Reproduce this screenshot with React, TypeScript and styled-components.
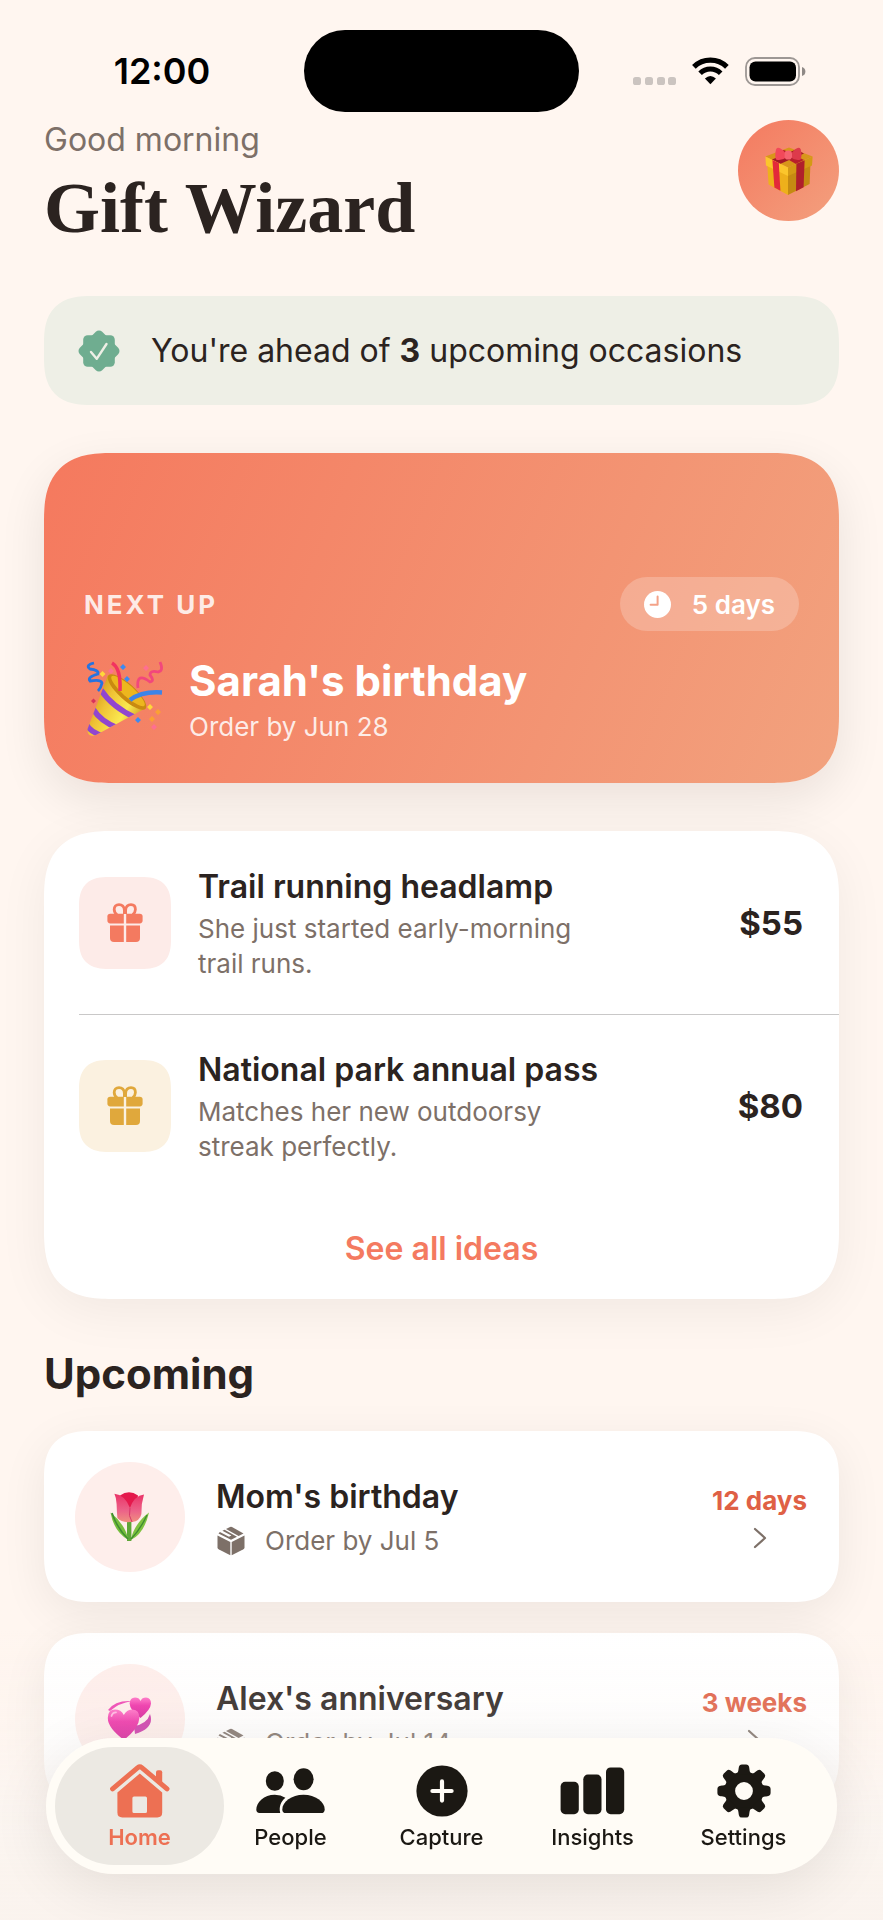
import React from 'react'
import styled, { createGlobalStyle, css } from 'styled-components'

const colors = {
    background: '#fff6f0',
    ink: '#2b2320',
    muted: '#7d7068',
    coral: '#f47a60',
    coralDark: '#df6045',
    sage: '#6fad90',
    sageLight: '#eeefe6',
    gold: '#e0a83c',
}

// Rounded corners that ease into the straight edge where the browser can draw them
const smoothCorners = (radius: number, smoothRadius: number) => css`
    border-radius: ${radius}px;

    @supports (corner-shape: superellipse(1.4)) {
        border-radius: ${smoothRadius}px;
        corner-shape: superellipse(1.4);
    }
`

const GlobalStyle = createGlobalStyle`
    * {
        box-sizing: border-box;
    }

    body {
        margin: 0;
        background: ${colors.background};
        color: ${colors.ink};
        font-family: Inter, 'Liberation Sans', sans-serif;
        -webkit-font-smoothing: antialiased;
    }

    a {
        color: inherit;
        text-decoration: none;
    }

    svg {
        display: block;
        flex-shrink: 0;
    }
`

const Page = styled.div`
    min-height: 100vh;
    padding-bottom: 116px;
`

const StatusBar = styled.div`
    display: grid;
    grid-template-columns: 1fr auto 1fr;
    align-items: center;
    padding: 30px 44px 0 44px;
    height: 112px;
    color: #000000;
`

const Time = styled.time`
    justify-self: center;
    font-size: 36px;
    font-weight: 600;
    line-height: 44px;
    padding-right: 24px;
`

const Island = styled.div`
    width: 275px;
    height: 82px;
    border-radius: 41px;
    background: #000000;
`

const StatusIcons = styled.div`
    display: flex;
    align-items: center;
    justify-self: end;
    gap: 16px;
    padding-right: 33px;
`

const Content = styled.main`
    display: flex;
    flex-direction: column;
    gap: 48px;
    padding: 8px 44px 0 44px;
`

const Header = styled.header`
    display: flex;
    justify-content: space-between;
    align-items: flex-start;
`

const Greeting = styled.p`
    margin: 0 0 8px 0;
    color: ${colors.muted};
    font-size: 32px;
    line-height: 40px;
`

const Title = styled.h1`
    margin: 0;
    font-family: 'Liberation Serif', serif;
    font-size: 72px;
    font-weight: 700;
    line-height: 80px;
`

const ProfileButton = styled.button`
    display: flex;
    align-items: center;
    justify-content: center;
    width: 101px;
    height: 101px;
    padding: 0;
    border: 0;
    border-radius: 50%;
    background: linear-gradient(135deg, ${colors.coral}, #f3a07e);
`

const Banner = styled.section`
    display: flex;
    align-items: center;
    gap: 31px;
    min-height: 109px;
    padding: 0 34px;
    ${smoothCorners(36, 48)}
    background: ${colors.sageLight};
    font-size: 32px;
    line-height: 41px;
`

const Hero = styled.section`
    display: flex;
    flex-direction: column;
    justify-content: flex-end;
    gap: 24px;
    min-height: 330px;
    padding: 38px 40px;
    ${smoothCorners(52, 68)}
    background: linear-gradient(112deg, #f5795e, #f2a27e);
    box-shadow: 0 16px 48px rgba(20, 10, 5, 0.09);
    color: #ffffff;
`

const HeroTop = styled.div`
    display: flex;
    align-items: center;
    justify-content: space-between;
`

const Eyebrow = styled.span`
    color: rgba(255, 255, 255, 0.85);
    font-size: 26px;
    font-weight: 700;
    letter-spacing: 3px;
`

const Countdown = styled.span`
    display: flex;
    align-items: center;
    gap: 21px;
    height: 54px;
    padding: 0 24px;
    border-radius: 27px;
    background: rgba(255, 255, 255, 0.22);
    font-size: 26px;
    font-weight: 600;
`

const HeroBottom = styled.div`
    display: flex;
    align-items: center;
    gap: 25px;
`

const HeroTitle = styled.h2`
    margin: 0 0 2px 0;
    font-size: 42px;
    font-weight: 700;
    line-height: 52px;
`

const HeroNote = styled.p`
    margin: 0;
    color: rgba(255, 255, 255, 0.85);
    font-size: 26px;
    line-height: 36px;
`

const Ideas = styled.section`
    ${smoothCorners(52, 68)}
    background: #ffffff;
    box-shadow: 0 12px 52px rgba(20, 10, 5, 0.06);
`

const IdeaList = styled.ul`
    margin: 0;
    padding: 0 0 0 35px;
    list-style: none;
`

const IdeaRow = styled.li`
    display: flex;
    align-items: center;
    gap: 27px;
    height: 183px;
    padding-right: 36px;

    & + & {
        border-top: 1px solid #c9c8c8;
    }
`

const Tile = styled.div<{ $background: string }>`
    display: flex;
    align-items: center;
    justify-content: center;
    flex-shrink: 0;
    width: 92px;
    height: 92px;
    ${smoothCorners(24, 30)}
    background: ${({ $background }) => $background};
`

const IdeaText = styled.div`
    flex: 1;
`

const RowTitle = styled.h3`
    margin: 0 0 2px 0;
    font-size: 32px;
    font-weight: 600;
    line-height: 44px;
`

const IdeaNote = styled.p`
    margin: 0;
    max-width: 410px;
    color: ${colors.muted};
    font-size: 26px;
    line-height: 35px;
`

const Price = styled.span`
    font-size: 33px;
    font-weight: 700;
`

const SeeAll = styled.button`
    display: block;
    width: 100%;
    height: 102px;
    padding: 0;
    border: 0;
    background: none;
    color: ${colors.coral};
    font-family: inherit;
    font-size: 32px;
    font-weight: 600;
`

const SectionTitle = styled.h2`
    margin: 0 0 30px 0;
    font-size: 42px;
    font-weight: 700;
    line-height: 54px;
`

const OccasionList = styled.ul`
    display: flex;
    flex-direction: column;
    gap: 31px;
    margin: 0;
    padding: 0;
    list-style: none;
`

const OccasionCard = styled.a`
    display: flex;
    align-items: center;
    gap: 31px;
    height: 171px;
    padding: 0 32px 0 31px;
    ${smoothCorners(36, 48)}
    background: #ffffff;
    box-shadow: 0 12px 48px rgba(20, 10, 5, 0.07);
`

const Avatar = styled.div`
    display: flex;
    align-items: center;
    justify-content: center;
    flex-shrink: 0;
    width: 110px;
    height: 110px;
    border-radius: 50%;
    background: #feeeeb;
`

const OccasionText = styled.div`
    display: flex;
    flex: 1;
    flex-direction: column;
    gap: 2px;
`

const OrderBy = styled.p`
    display: flex;
    align-items: center;
    gap: 19px;
    margin: 0;
    color: ${colors.muted};
    font-size: 26px;
    line-height: 35px;
`

const Due = styled.div`
    display: flex;
    flex-direction: column;
    align-items: center;
    gap: 8px;
    padding-bottom: 2px;
    color: ${colors.coralDark};
    font-size: 26px;
    font-weight: 700;
    line-height: 36px;
`

const BottomFade = styled.div`
    position: fixed;
    right: 0;
    bottom: 0;
    left: 0;
    height: 290px;
    background: linear-gradient(
        rgba(250, 244, 240, 0),
        rgba(250, 244, 240, 0.2) 38%,
        rgba(250, 244, 240, 0.8) 62%,
        rgba(250, 243, 237, 0.9)
    );
    pointer-events: none;
`

const TabBar = styled.nav`
    position: fixed;
    right: 46px;
    bottom: 46px;
    left: 46px;
    display: flex;
    padding: 9px 18px;
    border-radius: 68px;
    background: #fffcf6;
    box-shadow: 0 14px 60px rgba(10, 8, 0, 0.09);
`

const Tab = styled.a<{ $active: boolean }>`
    display: flex;
    flex: 1;
    flex-direction: column;
    align-items: center;
    gap: 5px;
    margin: 0 -9px;
    padding: 17px 0 14px 0;
    border-radius: 59px;
    background: ${({ $active }) => ($active ? '#ece9e3' : 'none')};
    color: ${({ $active }) => ($active ? '#ed7053' : '#1b1813')};
    font-size: 22px;
    font-weight: ${({ $active }) => ($active ? 600 : 500)};
    line-height: 28px;
`

const TabIcon = styled.span`
    display: flex;
    align-items: center;
    height: 54px;
`

const SignalIcon = () => (
    <svg width="43" height="28" viewBox="0 0 43 28" fill="#cbc4c0" aria-hidden="true">
        {[0, 12, 24, 35].map((x) => (
            <rect key={x} x={x} y="20" width="8" height="8" rx="2.6" />
        ))}
    </svg>
)

const WifiIcon = () => (
    <svg width="37" height="28" viewBox="0 0 37 28" fill="none" stroke="#000000" aria-hidden="true">
        <path d="M1.9 9.8A23.6 23.6 0 0 1 34.9 9.8" strokeWidth="5.2" />
        <path d="M8.1 16.3A14.6 14.6 0 0 1 28.7 16.3" strokeWidth="5" />
        <path d="M12.9 21.6Q18.4 16.4 23.9 21.6L18.4 27.2Z" fill="#000000" stroke="none" />
    </svg>
)

const BatteryIcon = () => (
    <svg width="61" height="29" viewBox="0 0 61 29" aria-hidden="true">
        <rect x="1" y="1" width="53" height="27" rx="9" fill="none" stroke="#9d9794" strokeWidth="1.8" />
        <rect x="4.5" y="4.5" width="46.5" height="20" rx="6" fill="#000000" />
        <path d="M57 10Q60.4 11 60.4 14.5T57 19Z" fill="#8f8986" />
    </svg>
)

const SealIcon = () => (
    <svg width="42" height="42" viewBox="0 0 42 42" aria-hidden="true">
        <rect x="5.2" y="5.2" width="31.6" height="31.6" rx="4.5" fill={colors.sage} />
        <rect x="5.2" y="5.2" width="31.6" height="31.6" rx="4.5" fill={colors.sage} transform="rotate(45 21 21)" />
        <path
            d="M13 22L18.7 28.8L28.5 14"
            fill="none"
            stroke={colors.sageLight}
            strokeWidth="2.4"
            strokeLinecap="round"
            strokeLinejoin="round"
        />
    </svg>
)

const ClockIcon = () => (
    <svg width="27" height="27" viewBox="0 0 27 27" aria-hidden="true">
        <circle cx="13.5" cy="13.5" r="13.5" fill="#ffffff" />
        <path d="M13.6 5.6V13.7H6.6" fill="none" stroke="#f4a288" strokeWidth="2" strokeLinecap="round" strokeLinejoin="round" />
    </svg>
)

const GiftIcon = ({ color }: { color: string }) => (
    <svg width="36" height="40" viewBox="0 0 36 40" fill={color} aria-hidden="true">
        <path
            d="M17.4 11V7.6C17.4 3.6 15 1.6 12 1.6C9 1.6 7.2 3.7 7.2 6.4C7.2 8.6 8 10 10 11.6M18.6 11V7.6C18.6 3.6 21 1.6 24 1.6C27 1.6 28.4 3.7 28.4 6.4C28.4 8.6 27.6 10 25.8 11.6"
            fill="none"
            stroke={color}
            strokeWidth="2.8"
        />
        <path d="M3.2 10.8H16.8V20.4H3.2Q.4 20.4 .4 17.6V13.6Q.4 10.8 3.2 10.8Z" />
        <path d="M19.2 10.8H32.8Q35.6 10.8 35.6 13.6V17.6Q35.6 20.4 32.8 20.4H19.2Z" />
        <path d="M3 22.6H16.8V39H7Q3 39 3 35Z" />
        <path d="M19.2 22.6H33V35Q33 39 29 39H19.2Z" />
    </svg>
)

const BoxIcon = () => (
    <svg width="30" height="30" viewBox="0 0 30 30" fill={colors.muted} aria-hidden="true">
        <path d="M1.5 9.6L14.3 16V29.2L3 23.6Q1.5 22.8 1.5 21.2Z" />
        <path d="M28.5 9.6L15.7 16V29.2L27 23.6Q28.5 22.8 28.5 21.2Z" />
        <path d="M10 3L14 1Q15 .5 16 1L27.5 7.4L22.6 9.9Z" />
        <path d="M8.6 3.7L21 10.7L15 13.8L2.5 7.5L3.9 6.1L13 10.8L15.4 9.5L6.4 4.8Z" />
    </svg>
)

const Chevron = () => (
    <svg width="14" height="22" viewBox="0 0 14 22" aria-hidden="true">
        <path
            d="M2 2L12 11L2 20"
            fill="none"
            stroke={colors.muted}
            strokeWidth="2.2"
            strokeLinecap="round"
            strokeLinejoin="round"
        />
    </svg>
)

const HomeIcon = () => (
    <svg width="60" height="54" viewBox="0 0 60 54" fill="currentColor" aria-hidden="true">
        <path
            d="M2.6 24.8L27.8 3.6Q29.8 2 31.8 3.6L57 24.8"
            fill="none"
            stroke="currentColor"
            strokeWidth="5"
            strokeLinecap="round"
            strokeLinejoin="round"
        />
        <path d="M46 14.5V8.2Q46 6.2 48 6.2H50.2Q52.2 6.2 52.2 8.2V20Z" />
        <path
            fillRule="evenodd"
            d="M29.8 9.6L52.2 28.4V48.5Q52.2 53.4 47.3 53.4H12.3Q7.4 53.4 7.4 48.5V28.4ZM24 32.4Q22.4 32.4 22.4 34V47.4Q22.4 49 24 49H35.4Q37 49 37 47.4V34Q37 32.4 35.4 32.4Z"
        />
    </svg>
)

const PeopleIcon = () => (
    <svg width="69" height="46" viewBox="0 0 69 46" fill="currentColor" aria-hidden="true">
        <ellipse cx="47.6" cy="11.2" rx="10" ry="11" />
        <ellipse cx="18.8" cy="13" rx="9" ry="9.8" />
        <path d="M30 45Q26.3 45 26.3 41.4C26.3 34 35.5 26.8 47.5 26.8S68.7 34 68.7 41.4Q68.7 45 65 45Z" />
        <path d="M24.2 45H3.5Q.3 45 .3 41.6C.3 34.5 8 26.8 18.8 26.8Q24.8 26.8 29.4 29.8C24.6 33.6 22.8 39.4 24.2 45Z" />
    </svg>
)

const CaptureIcon = () => (
    <svg width="52" height="52" viewBox="0 0 52 52" aria-hidden="true">
        <circle cx="26" cy="26" r="25.6" fill="currentColor" />
        <path d="M26 16.4V35.6M16.4 26H35.6" stroke="#fffcf6" strokeWidth="4.2" strokeLinecap="round" />
    </svg>
)

const InsightsIcon = () => (
    <svg width="65" height="48" viewBox="0 0 65 48" fill="currentColor" aria-hidden="true">
        <rect x=".6" y="14.8" width="18.2" height="32.4" rx="4.6" />
        <rect x="23.3" y="7.6" width="18.2" height="39.6" rx="4.6" />
        <rect x="46" y=".4" width="18.2" height="46.8" rx="4.6" />
    </svg>
)

const GearIcon = () => (
    <svg width="54" height="54" viewBox="-27 -27 54 54" fill="currentColor" aria-hidden="true">
        <circle r="14.2" fill="none" stroke="currentColor" strokeWidth="10.6" />
        {[0, 45, 90, 135, 180, 225, 270, 315].map((angle) => (
            <path
                key={angle}
                transform={`rotate(${angle})`}
                d="M-8 -16.5C-5.2 -18.6 -5.8 -21 -5 -24.4Q-4.4 -26.6 -2.2 -26.6H2.2Q4.4 -26.6 5 -24.4C5.8 -21 5.2 -18.6 8 -16.5Z"
            />
        ))}
    </svg>
)

const PresentEmoji = () => (
    <svg width="50" height="50" viewBox="0 0 50 50" role="img" aria-label="Present">
        <path d="M3 15L24 25V49L4.6 38.5Z" fill="#eeb01b" />
        <path d="M24 25L46.6 14.5L45.6 38L24 49Z" fill="#c58a12" />
        <path d="M1.4 10.6L25 1.4L48.6 10.6L24 21.6Z" fill="#d8961a" />
        <path d="M12 6.6L20 4L40 14L32 18Z" fill="#b81f2b" />
        <path d="M8 13.5L32 3.5L40 7.5L16 18Z" fill="#a31a26" />
        <path d="M1.4 10.6L24 21.4V30L2 19.6Z" fill="#fbc62c" />
        <path d="M24 21.4L48.6 10.6L48 19.6L24 30Z" fill="#d49a14" />
        <path d="M8.4 14L14.8 17L16.4 44.8L10.4 41.5Z" fill="#e3293a" />
        <path d="M32.4 17.8L40.6 14.2L39.6 41.2L32 45.2Z" fill="#b01f2b" />
        <path d="M23 9Q15 -1.5 12.2 3Q10.4 9 12 13.6Q17 15.4 23 11Z" fill="#f2495a" />
        <path d="M26 9Q34 -1.5 36.6 3Q38.4 9 36.6 13.6Q32 15.4 26 11Z" fill="#dd3a4b" />
        <rect x="20.6" y="4.6" width="7.4" height="9" rx="3.4" fill="#f5626f" />
    </svg>
)

const PartyEmoji = () => (
    <svg width="80" height="80" viewBox="0 0 80 80" role="img" aria-label="Party popper">
        <defs>
            <linearGradient id="cone" x1="0" y1="0.2" x2="1" y2="0.8">
                <stop offset="0" stopColor="#c98a10" />
                <stop offset="0.35" stopColor="#f0c235" />
                <stop offset="0.65" stopColor="#faea50" />
                <stop offset="1" stopColor="#c07c10" />
            </linearGradient>
            <clipPath id="coneShape">
                <path d="M24 15L62 48L12 75Q3 78 3.5 69Z" />
            </clipPath>
        </defs>
        <path d="M24 15L62 48L12 75Q3 78 3.5 69Z" fill="url(#cone)" />
        <g clipPath="url(#coneShape)" fill="none" stroke="#9146cf" strokeWidth="5.5">
            <path d="M17 30Q28 47 52 58" />
            <path d="M9 49Q17 62 34 68" />
            <path d="M2 64Q7 73 20 76" />
        </g>
        <ellipse cx="43" cy="32" rx="25" ry="8" transform="rotate(42 43 32)" fill="#c98a10" />
        <ellipse cx="44" cy="31" rx="22" ry="5.6" transform="rotate(42 44 31)" fill="#edb61e" />
        <path d="M28 3Q37 8 36 31" fill="none" stroke="#f23360" strokeWidth="3.6" />
        <path d="M46 40Q58 31 78 32.5" fill="none" stroke="#3d84e8" strokeWidth="4.4" />
        <path d="M10 3Q1 5 6 9Q15 10 14 14Q3 17 6 21Q17 19 18 23Q17 28 14 31" fill="none" stroke="#2673e0" strokeWidth="2.8" />
        <path d="M76 2Q80 11 74 12Q66 10 66 15Q71 21 66 22Q58 16 55 19Q53 22 54 28" fill="none" stroke="#f2477c" strokeWidth="2.8" />
        <path d="M36 7L39 4L42 7L39 10Z M40 19L43 16L46 19L43 22Z M51 60L54 57L57 60L54 63Z" fill="#3e8af0" />
        <path d="M24 11L27 8L30 11L27 14Z M59 8L62 5L65 8L62 11Z M67 67L70 64L73 67L70 70Z" fill="#ff6f91" />
        <path d="M15.5 14L18.5 11L21.5 14L18.5 17Z M63 47L66 44L69 47L66 50Z" fill="#ffd83a" />
        <path d="M71 52L74 49L77 52L74 55Z M65 59L68 56L71 59L68 62Z" fill="#fba034" />
        <path d="M7 41L9.5 38.5L12 41L9.5 43.5Z" fill="#d8325a" />
    </svg>
)

const TulipEmoji = () => (
    <svg width="44" height="50" viewBox="0 0 44 50" role="img" aria-label="Tulip">
        <defs>
            <linearGradient id="petal" x1="0" y1="0" x2="0" y2="1">
                <stop offset="0" stopColor="#ea3468" />
                <stop offset="0.6" stopColor="#ec6389" />
                <stop offset="1" stopColor="#f0907f" />
            </linearGradient>
        </defs>
        <path d="M19 26H23.4V49H19Z" fill="#5ea637" />
        <path d="M2.5 20.5Q17 32 20.5 48Q6 40 2.5 20.5Z" fill="#76bd3c" />
        <path d="M41 20.5Q26 32 22.8 48Q36 42 41 20.5Z" fill="#7fc240" />
        <path d="M4 21Q9 36 20 47" fill="none" stroke="#3f8d32" strokeWidth="1.6" />
        <path d="M39 23Q32 38 23 47" fill="none" stroke="#3f8d32" strokeWidth="1.4" />
        <path d="M12 3.4Q21 -3 30 3.4L26 26H16Z" fill="#e4194c" />
        <path d="M6.4 1.8Q17 3 22 16L25 29.6Q14 31.6 9.4 26Q8.8 20 8.6 12Q8.4 6 6.4 1.8Z" fill="url(#petal)" />
        <path d="M36 2.6Q26 4 22 16Q20 24 24 30Q32 29 33.4 22Q33 12 36 2.6Z" fill="url(#petal)" />
        <path d="M22 16Q20 24 24 30" fill="none" stroke="#d8386a" strokeWidth="1" />
    </svg>
)

const HeartsEmoji = () => (
    <svg width="46" height="46" viewBox="0 0 46 46" role="img" aria-label="Revolving hearts">
        <defs>
            <linearGradient id="heart" x1="0" y1="0" x2="0" y2="1">
                <stop offset="0" stopColor="#ff6cc4" />
                <stop offset="0.4" stopColor="#ee2ba6" />
                <stop offset="1" stopColor="#d41c98" />
            </linearGradient>
        </defs>
        <path d="M1 14Q8 4 25 5Q12 7 3 15Z" fill="#ee3fb0" />
        <path d="M27 30Q40 28 43 18Q48 32 28 38Z" fill="#cc34a8" />
        <path d="M33.5 22Q23 15 22.6 7.6Q23 1.6 28 1.6Q32 1.6 33.5 5Q35 1.6 39 1.6Q44 2 44 7.6Q43.6 14 33.5 22Z" fill="url(#heart)" />
        <path d="M17 44Q.8 32 .8 22Q1 13.6 8 13.6Q14 13.6 16.8 19Q20 13.6 25.6 13.6Q32.4 14 32.4 22Q32 32 17 44Z" fill="url(#heart)" />
        <path d="M4.5 20Q5.5 16.5 9 16.4" fill="none" stroke="#ffb4e0" strokeWidth="1.8" strokeLinecap="round" />
    </svg>
)

interface Idea {
    id: string
    title: string
    note: string
    price: string
    color: string
    background: string
}

const ideas: Idea[] = [
    {
        id: 'headlamp',
        title: 'Trail running headlamp',
        note: 'She just started early-morning trail runs.',
        price: '$55',
        color: colors.coral,
        background: '#fdebe8',
    },
    {
        id: 'park-pass',
        title: 'National park annual pass',
        note: 'Matches her new outdoorsy streak perfectly.',
        price: '$80',
        color: colors.gold,
        background: '#fbf1e0',
    },
]

interface Occasion {
    id: string
    title: string
    orderBy: string
    due: string
    emoji: React.ReactNode
}

const occasions: Occasion[] = [
    { id: 'mom', title: "Mom's birthday", orderBy: 'Order by Jul 5', due: '12 days', emoji: <TulipEmoji /> },
    { id: 'alex', title: "Alex's anniversary", orderBy: 'Order by Jul 14', due: '3 weeks', emoji: <HeartsEmoji /> },
]

const tabs = [
    { id: 'home', label: 'Home', icon: <HomeIcon /> },
    { id: 'people', label: 'People', icon: <PeopleIcon /> },
    { id: 'capture', label: 'Capture', icon: <CaptureIcon /> },
    { id: 'insights', label: 'Insights', icon: <InsightsIcon /> },
    { id: 'settings', label: 'Settings', icon: <GearIcon /> },
]

const IdeaItem = ({ idea }: { idea: Idea }) => (
    <IdeaRow>
        <Tile $background={idea.background}>
            <GiftIcon color={idea.color} />
        </Tile>
        <IdeaText>
            <RowTitle>{idea.title}</RowTitle>
            <IdeaNote>{idea.note}</IdeaNote>
        </IdeaText>
        <Price>{idea.price}</Price>
    </IdeaRow>
)

const OccasionItem = ({ occasion }: { occasion: Occasion }) => (
    <li>
        <OccasionCard href={`#${occasion.id}`}>
            <Avatar>{occasion.emoji}</Avatar>
            <OccasionText>
                <RowTitle>{occasion.title}</RowTitle>
                <OrderBy>
                    <BoxIcon />
                    {occasion.orderBy}
                </OrderBy>
            </OccasionText>
            <Due>
                {occasion.due}
                <Chevron />
            </Due>
        </OccasionCard>
    </li>
)

const App = () => (
    <Page>
        <GlobalStyle />
        <StatusBar>
            <Time>12:00</Time>
            <Island />
            <StatusIcons>
                <SignalIcon />
                <WifiIcon />
                <BatteryIcon />
            </StatusIcons>
        </StatusBar>
        <Content>
            <Header>
                <div>
                    <Greeting>Good morning</Greeting>
                    <Title>Gift Wizard</Title>
                </div>
                <ProfileButton aria-label="Profile">
                    <PresentEmoji />
                </ProfileButton>
            </Header>
            <Banner>
                <SealIcon />
                <span>
                    You're ahead of <strong>3</strong> upcoming occasions
                </span>
            </Banner>
            <Hero>
                <HeroTop>
                    <Eyebrow>NEXT UP</Eyebrow>
                    <Countdown>
                        <ClockIcon />5 days
                    </Countdown>
                </HeroTop>
                <HeroBottom>
                    <PartyEmoji />
                    <div>
                        <HeroTitle>Sarah's birthday</HeroTitle>
                        <HeroNote>Order by Jun 28</HeroNote>
                    </div>
                </HeroBottom>
            </Hero>
            <Ideas>
                <IdeaList>
                    {ideas.map((idea) => (
                        <IdeaItem idea={idea} key={idea.id} />
                    ))}
                </IdeaList>
                <SeeAll>See all ideas</SeeAll>
            </Ideas>
            <section>
                <SectionTitle>Upcoming</SectionTitle>
                <OccasionList>
                    {occasions.map((occasion) => (
                        <OccasionItem occasion={occasion} key={occasion.id} />
                    ))}
                </OccasionList>
            </section>
        </Content>
        <BottomFade />
        <TabBar>
            {tabs.map(({ id, label, icon }) => (
                <Tab href={`#${id}`} $active={id === 'home'} key={id}>
                    <TabIcon>{icon}</TabIcon>
                    {label}
                </Tab>
            ))}
        </TabBar>
    </Page>
)

export default App
